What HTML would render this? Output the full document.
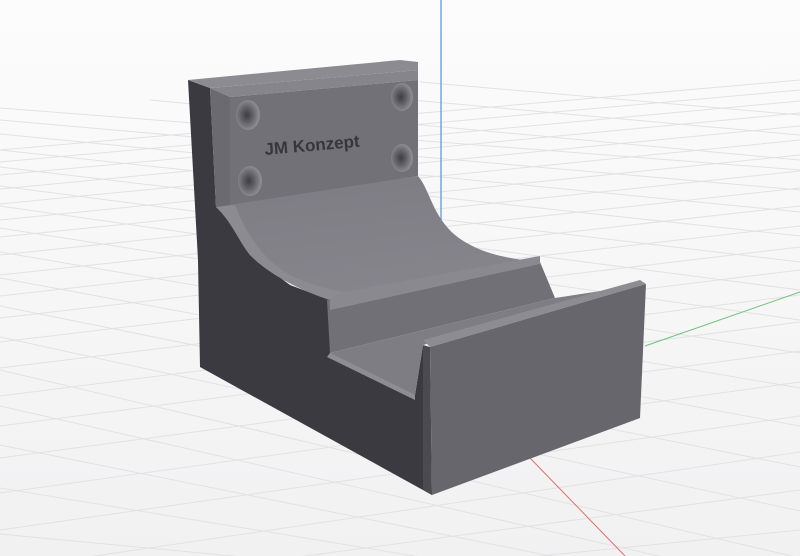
<!DOCTYPE html>
<html><head><meta charset="utf-8"><style>
html,body{margin:0;padding:0;width:800px;height:556px;overflow:hidden;background:#f6f6f7}
svg{display:block}
</style></head><body>
<svg width="800" height="556" viewBox="0 0 800 556" xmlns="http://www.w3.org/2000/svg">
<defs>
<linearGradient id="bg" x1="0" y1="0" x2="0" y2="1"><stop offset="0" stop-color="#fcfcfc"/><stop offset="1" stop-color="#f1f1f2"/></linearGradient>
<linearGradient id="curve" x1="0" y1="0" x2="0.3" y2="1"><stop offset="0" stop-color="#7d7c83"/><stop offset="1" stop-color="#86858c"/></linearGradient>
<radialGradient id="hole" cx="0.45" cy="0.5"><stop offset="0" stop-color="#3e3d43"/><stop offset="0.45" stop-color="#5e5d63"/><stop offset="0.8" stop-color="#7a7980"/><stop offset="1" stop-color="#8c8b91"/></radialGradient>
</defs>
<rect width="800" height="556" fill="url(#bg)"/>
<g stroke="#e2e2e4" stroke-width="1" fill="none">
<path d="M0 150 L800 80 M0 162 L800 90 M0 175 L800 101 M0 189 L800 113 M0 204 L800 126 M0 220 L800 140 M0 237 L800 155 M0 255 L800 171 M0 275 L800 188 M0 296 L800 206 M0 318 L800 226 M0 342 L800 247 M0 368 L800 270 M0 396 L800 295 M0 426 L800 322 M0 458 L800 351 M0 493 L800 382 M0 530 L800 416 M0 570 L800 452 M200 570 L800 490 M400 570 L800 530"/>
<path d="M0 120 L800 190 M0 134 L800 212 M0 150 L800 236 M0 167 L800 262 M0 186 L800 290 M0 206 L800 320 M0 228 L800 353 M0 252 L800 388 M0 278 L800 426 M0 306 L800 467 M0 337 L800 511 M0 370 L800 558 M0 406 L720 570 M0 445 L620 570 M0 488 L500 570 M0 534 L380 570 M150 100 L800 160 M300 90 L800 135 M420 82 L800 115 M0 108 L800 170"/>
</g>
<line x1="441" y1="0" x2="441" y2="300" stroke="#5a9be0" stroke-width="1.3"/>
<line x1="645" y1="346" x2="800" y2="292" stroke="#6fc27a" stroke-width="1"/>
<line x1="530" y1="458" x2="625" y2="556" stroke="#e07070" stroke-width="1"/>
<polygon points="188,80 210,88 216,207 228,212 250,255 290,285 330,300 330,353 415,395 423,345 432,495 200,367 198,260" fill="#3b3a40"/>
<polygon points="188,80 400,60 418,62 418,70 210,88" fill="#8c8b91"/>
<polygon points="210,88 418,70 418,80 230,97" fill="#86858b"/>
<polygon points="210,88 230,97 230,207 216,207" fill="#6b6a70"/>
<polygon points="230,97 418,80 418,176 230,207" fill="#727177"/>
<path d="M216,207 L418,176 C430,190 432,215 455,235 C480,255 510,258 535,262 L330,300 C300,290 270,275 250,255 C238,240 232,222 216,207 Z" fill="url(#curve)"/>
<path d="M216,207 L235,205 C245,230 260,258 290,275 C310,285 330,290 345,292 L330,300 C300,290 270,275 250,255 C238,240 232,222 216,207 Z" fill="#8c8b92"/>
<polygon points="327,300 540,262 555,298 330,353" fill="#707076"/>
<polygon points="330,300 345,292 540,256 540,264 330,310" fill="#8a8990"/>
<polygon points="330,353 555,298 640,285 423,345 415,395" fill="#7e7d84"/>
<polygon points="330,353 415,395 415,400 327,357" fill="#8e8d93"/>
<polygon points="423,340 640,280 646,284 430,347" fill="#8d8c92"/>
<polygon points="423,345 430,347 432,495 423,490" fill="#4b4a50"/>
<polygon points="430,347 646,284 640,418 432,495" fill="#67666c"/>
<ellipse cx="248" cy="115" rx="12" ry="15" fill="url(#hole)"/>
<ellipse cx="402" cy="97" rx="11" ry="14" fill="url(#hole)"/>
<ellipse cx="250" cy="181" rx="12" ry="15" fill="url(#hole)"/>
<ellipse cx="402" cy="158" rx="11" ry="14" fill="url(#hole)"/>
<text x="265" y="155" transform="rotate(-5 265 155)" font-family="Liberation Sans, sans-serif" font-weight="bold" font-size="17" fill="#37363c">JM Konzept</text>
</svg>
</body></html>
